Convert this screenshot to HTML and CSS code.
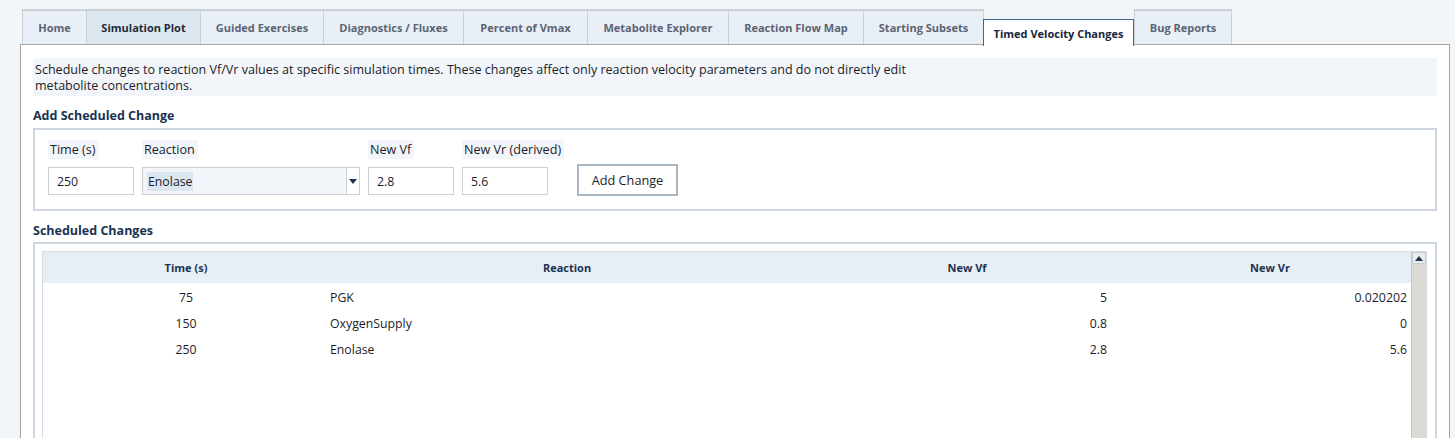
FILE: index.html
```html
<!DOCTYPE html>
<html lang="en">
<head>
<meta charset="utf-8">
<title>Timed Velocity Changes</title>
<link rel="stylesheet" href="styles.css">
</head>
<body>
<div class="app">
  <div class="tabs">
    <div class="tab t-home">Home</div>
    <div class="tab t-sim hover">Simulation Plot</div>
    <div class="tab t-guided">Guided Exercises</div>
    <div class="tab t-diag">Diagnostics / Fluxes</div>
    <div class="tab t-pct">Percent of Vmax</div>
    <div class="tab t-met">Metabolite Explorer</div>
    <div class="tab t-flow">Reaction Flow Map</div>
    <div class="tab t-start">Starting Subsets</div>
    <div class="tab t-timed selected">Timed Velocity Changes</div>
    <div class="tab t-bug">Bug Reports</div>
  </div>
  <div class="pane">
    <div class="info">Schedule changes to reaction Vf/Vr values at specific simulation times. These changes affect only reaction velocity parameters and do not directly edit<br>metabolite concentrations.</div>

    <div class="heading h-add">Add Scheduled Change</div>
    <div class="group form-group">
      <div class="field f-time">
        <span class="label">Time (s)</span>
        <div class="entry">250</div>
      </div>
      <div class="field f-reaction">
        <span class="label">Reaction</span>
        <div class="combo">
          <div class="combo-text"><span class="combo-sel">Enolase</span></div>
          <div class="combo-arrow"><svg width="8" height="5" viewBox="0 0 8 5"><path d="M0 0H8L4 5Z" fill="#1f3550"/></svg></div>
        </div>
      </div>
      <div class="field f-vf">
        <span class="label">New Vf</span>
        <div class="entry">2.8</div>
      </div>
      <div class="field f-vr">
        <span class="label">New Vr (derived)</span>
        <div class="entry">5.6</div>
      </div>
      <div class="button">Add Change</div>
    </div>

    <div class="heading h-sched">Scheduled Changes</div>
    <div class="group table-group">
      <div class="tree">
        <div class="tree-body">
          <div class="row head">
            <div class="c c1">Time (s)</div>
            <div class="c c2">Reaction</div>
            <div class="c c3">New Vf</div>
            <div class="c c4">New Vr</div>
          </div>
          <div class="row">
            <div class="c c1">75</div>
            <div class="c c2">PGK</div>
            <div class="c c3">5</div>
            <div class="c c4">0.020202</div>
          </div>
          <div class="row">
            <div class="c c1">150</div>
            <div class="c c2">OxygenSupply</div>
            <div class="c c3">0.8</div>
            <div class="c c4">0</div>
          </div>
          <div class="row">
            <div class="c c1">250</div>
            <div class="c c2">Enolase</div>
            <div class="c c3">2.8</div>
            <div class="c c4">5.6</div>
          </div>
        </div>
        <div class="scrollbar">
          <div class="sb-up"><svg width="8" height="5" viewBox="0 0 8 5"><path d="M4 0L8 5H0Z" fill="#1f3550"/></svg></div>
          <div class="sb-trough"></div>
        </div>
      </div>
    </div>
  </div>
</div>
</body>
</html>
```

FILE: styles.css
```css
* { box-sizing: border-box; }

html, body {
  margin: 0;
  padding: 0;
  height: 100%;
  overflow: hidden;
}

body {
  background: #f3f6f9;
  font-family: "Open Sans", "Noto Sans", "DejaVu Sans", sans-serif;
  font-size: 12.3px;
  color: #1c1c28;
}

.app {
  padding: 9px 0 0 20px;
}

/* ---- notebook tabs ---- */
.tabs {
  display: flex;
  align-items: flex-start;
  padding-left: 2px;
  height: 36px;
  position: relative;
  z-index: 2;
  font-size: 11px;
}

.tab {
  height: 35px;
  display: flex;
  align-items: center;
  justify-content: center;
  background: #e8eff6;
  border: 1px solid #ccd0d4;
  border-top-width: 2px;
  border-bottom: none;
  margin-right: -1px;
  font-weight: 700;
  color: #5b6473;
  white-space: nowrap;
}

.tab.hover {
  background: #dde7f0;
  color: #1f2b3a;
}

.tab.selected {
  margin-top: 10px;
  height: 27px;
  background: #ffffff;
  border: 1px solid #3f6797;
  border-bottom: none;
  color: #14263b;
  padding-top: 1px;
}

.t-home   { width: 65px; }
.t-sim    { width: 115px; }
.t-guided { width: 124px; }
.t-diag   { width: 141px; }
.t-pct    { width: 125px; }
.t-met    { width: 142px; }
.t-flow   { width: 136px; }
.t-start  { width: 121px; }
.t-timed  { width: 151px; }
.t-bug    { width: 98px; margin-left: 1px; }

/* ---- tab content ---- */
.pane {
  margin-top: -1px;
  width: 1430px;
  height: 420px;
  background: #ffffff;
  border: 1px solid #a9a49d;
  padding: 13px 12px 0 12px;
}

.info {
  background: #f2f5f9;
  padding: 4px 2px 2px 2px;
  line-height: 16px;
  height: 38px;
  font-size: 12.55px;
}

.heading {
  font-weight: 700;
  color: #1b3352;
  font-size: 12.5px;
  line-height: 16px;
}

.h-add { margin-top: 12px; }
.h-sched { margin-top: 12px; }

.group {
  border: 2px solid #cdd6df;
  margin-top: 4px;
}

/* ---- form row ---- */
.form-group {
  height: 83px;
  display: flex;
  align-items: flex-start;
  padding: 10px 0 0 13px;
  gap: 8px;
}

.field {
  display: flex;
  flex-direction: column;
  align-items: flex-start;
  width: 86px;
}

.f-reaction { width: 218px; }

.label {
  background: #f2f5f9;
  padding: 0 3px 0 2px;
  line-height: 19px;
  margin-bottom: 8px;
  font-size: 12.6px;
  white-space: nowrap;
}

.entry {
  width: 86px;
  height: 28px;
  border: 1px solid #ccd0d5;
  background: #ffffff;
  padding-left: 8px;
  display: flex;
  align-items: center;
}

.combo {
  width: 218px;
  height: 28px;
  border: 1px solid #ccd0d5;
  display: flex;
  background: #f2f5f9;
}

.combo-text {
  flex: 1;
  display: flex;
  align-items: center;
  padding-left: 4px;
}

.combo-sel {
  background: #dbe6f1;
  padding: 1px 1px;
}

.combo-arrow {
  width: 13px;
  border-left: 1px solid #ccd0d5;
  background: #ffffff;
  display: flex;
  align-items: center;
  justify-content: center;
}

.button {
  margin-left: 21px;
  margin-top: 24px;
  width: 101px;
  height: 32px;
  border: 2px solid #a9b6c3;
  background: #ffffff;
  display: flex;
  align-items: center;
  justify-content: center;
  font-size: 12.7px;
}

/* ---- scheduled changes table ---- */
.table-group {
  height: 220px;
  margin-top: 3px;
  padding: 7px 8px 0 7px;
}

.tree {
  display: flex;
  height: 100%;
  border: 1px solid #d3dae1;
  border-bottom: none;
}

.tree-body {
  flex: 1;
}

.row {
  display: grid;
  grid-template-columns: 286px 476px 324px 1fr;
  height: 26px;
  padding-top: 2px;
  align-items: center;
}

.row.head {
  height: 31px;
  padding-top: 0;
  background: #e8eef5;
  font-weight: 700;
  color: #1b3352;
  font-size: 11px;
}

.c1 { text-align: center; }
.c2 { text-align: left; padding-left: 1px; }
.c3 { text-align: right; padding-right: 22px; }
.c4 { text-align: right; padding-right: 4px; }

.row.head .c { text-align: center; padding: 0; }

.scrollbar {
  width: 15px;
  display: flex;
  flex-direction: column;
  background: #dcdad5;
  border-left: 1px solid #c9c7c2;
}

.sb-up {
  height: 12px;
  background: #e9ecef;
  border: 1px solid #c9ccd0;
  display: flex;
  align-items: center;
  justify-content: center;
}

.sb-trough {
  flex: 1;
}
```
